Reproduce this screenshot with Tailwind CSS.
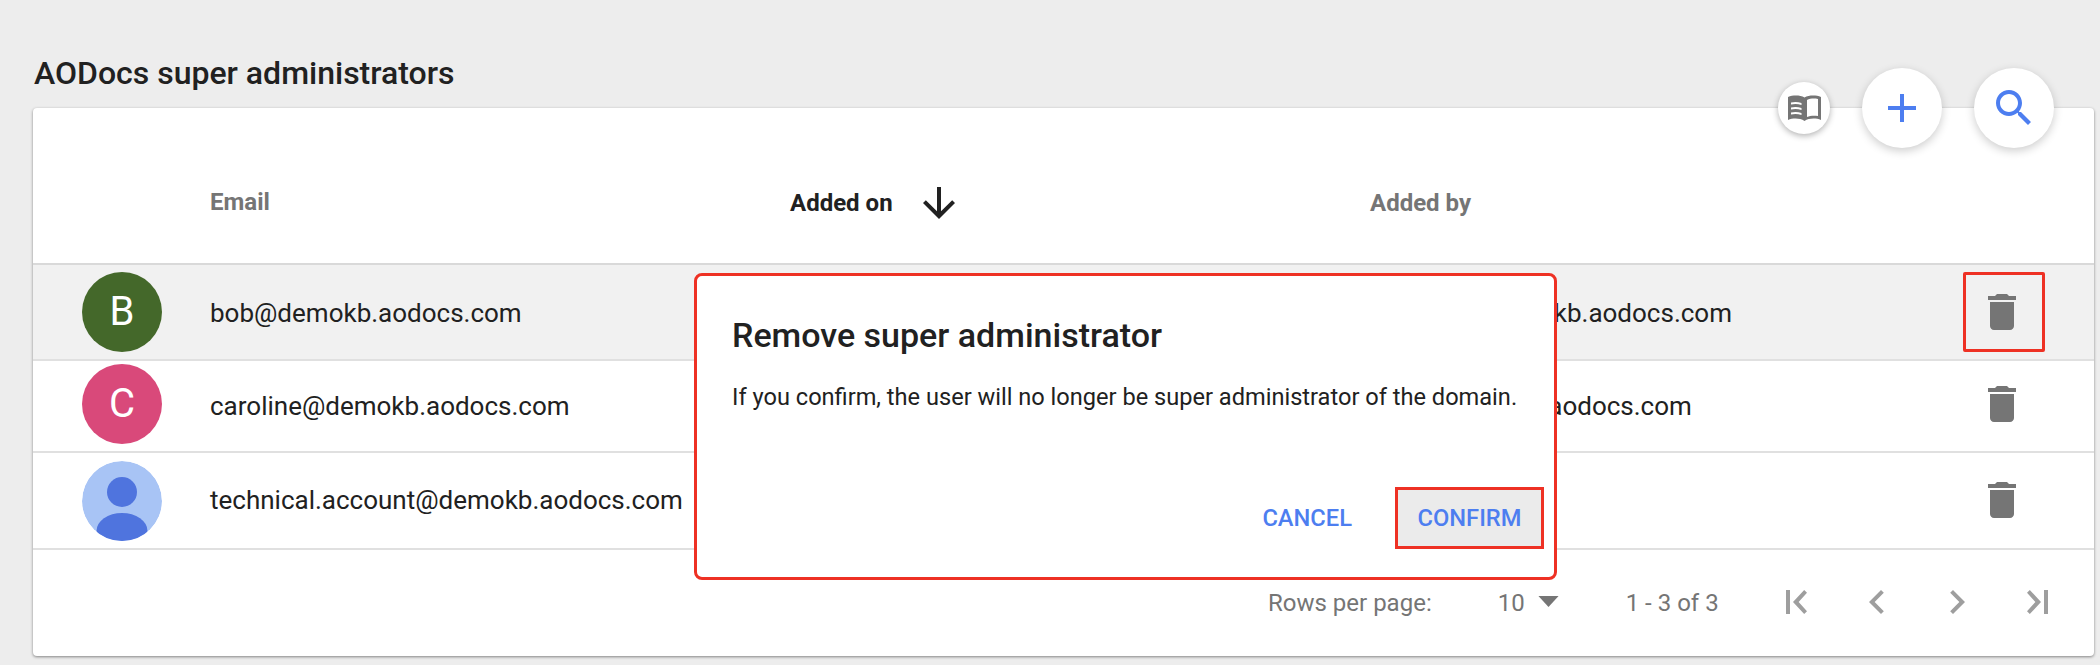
<!DOCTYPE html>
<html><head><meta charset="utf-8"><script src="https://cdn.jsdelivr.net/npm/@tailwindcss/browser@4"></script></head>
<body class="m-0 bg-[#ededed]">
<div class="relative w-[2100px] h-[665px] overflow-hidden bg-[#ededed] font-['Roboto',sans-serif] text-[#212121]">
  <h1 class="pl-[34px] pt-[56px] h-[108px] text-[32px] leading-[34px] font-medium">AODocs super administrators</h1>

  <div class="relative ml-[33px] w-[2061px] h-[548px] bg-white rounded-[4px] shadow-[0_1px_3px_rgba(0,0,0,0.45)] flex flex-col">
    <div class="grid grid-cols-[177px_580px_580px_1fr] items-center h-[157px] pt-[35px] border-b-2 border-[#d9d9d9] text-[24px] font-bold text-[#757575]">
      <span></span>
      <span class="-mt-[2px]">Email</span>
      <span class="flex items-center text-[#212121]"><span>Added on</span>
        <svg class="ml-[22px] w-[48px] h-[48px]" viewBox="0 0 24 24" fill="#212121"><path d="M20 12l-1.41-1.41L13 16.17V4h-2v12.17l-5.58-5.59L4 12l8 8 8-8z"/></svg>
      </span>
      <span>Added by</span>
    </div>

    <div class="grid grid-cols-[177px_1160px_1fr_131px] items-center h-[96px] border-b-2 border-[#e0e0e0] bg-[#f1f1f1] text-[26px]">
      <div class="pl-[49px]"><div class="w-[80px] h-[80px] rounded-full bg-[#44682a] text-white flex items-center justify-center text-[40px]">B</div></div>
      <span class="mt-[2px]">bob@demokb.aodocs.com</span>
      <span class="mt-[2px]">thomasi@demokb.aodocs.com</span>
      <div><div class="w-[82px] h-[80px] border-[3px] border-[#ee3124] rounded-[2px] flex items-center justify-center pr-[4px]">
        <svg class="w-[48px] h-[48px]" viewBox="0 0 24 24" fill="#757575"><path d="M6 19c0 1.1.9 2 2 2h8c1.1 0 2-.9 2-2V7H6v12zM19 4h-3.5l-1-1h-5l-1 1H5v2h14V4z"/></svg>
      </div></div>
    </div>

    <div class="grid grid-cols-[177px_1160px_1fr_131px] items-center h-[92px] border-b-2 border-[#e0e0e0] text-[26px]">
      <div class="pl-[49px]"><div class="w-[80px] h-[80px] -mt-[4px] rounded-full bg-[#d9497a] text-white flex items-center justify-center text-[40px]">C</div></div>
      <span>caroline@demokb.aodocs.com</span>
      <span>alice@demokb.aodocs.com</span>
      <div class="flex justify-center w-[78px] -mt-[4px]">
        <svg class="w-[48px] h-[48px]" viewBox="0 0 24 24" fill="#757575"><path d="M6 19c0 1.1.9 2 2 2h8c1.1 0 2-.9 2-2V7H6v12zM19 4h-3.5l-1-1h-5l-1 1H5v2h14V4z"/></svg>
      </div>
    </div>

    <div class="grid grid-cols-[177px_1160px_1fr_131px] items-center h-[97px] border-b-2 border-[#e0e0e0] text-[26px]">
      <div class="pl-[49px]"><div class="w-[80px] h-[80px] rounded-full overflow-hidden">
        <svg class="w-full h-full" viewBox="0 0 80 80"><circle cx="40" cy="40" r="40" fill="#a8c4f5"/><circle cx="40" cy="31" r="15" fill="#4f74de"/><ellipse cx="40" cy="70" rx="25.5" ry="18" fill="#4f74de"/></svg>
      </div></div>
      <span>technical.account@demokb.aodocs.com</span>
      <span></span>
      <div class="flex justify-center w-[78px] -mt-[2px]">
        <svg class="w-[48px] h-[48px]" viewBox="0 0 24 24" fill="#757575"><path d="M6 19c0 1.1.9 2 2 2h8c1.1 0 2-.9 2-2V7H6v12zM19 4h-3.5l-1-1h-5l-1 1H5v2h14V4z"/></svg>
      </div>
    </div>

    <div class="flex-1 flex items-center text-[#757575] text-[24px]">
      <span class="ml-[1235px]">Rows per page:</span>
      <span class="ml-[66px]">10</span>
      <svg class="ml-[13px] w-[21px] h-[11px] -mt-[4px]" viewBox="0 0 22 12" fill="#757575"><path d="M0 0h22L11 12z"/></svg>
      <span class="ml-[67px]">1 - 3 of 3</span>
      <div class="ml-[54px] flex items-center gap-[32px] -mt-[2px]">
        <svg class="w-[48px] h-[48px]" viewBox="0 0 24 24" fill="#9e9e9e"><path d="M6.5 6h2v12h-2zM17 7.41L15.59 6 10 12l5.59 6L17 16.59 12.82 12z"/></svg>
        <svg class="w-[48px] h-[48px]" viewBox="0 0 24 24" fill="#9e9e9e"><path d="M15.41 7.41L14 6l-6 6 6 6 1.41-1.41L10.83 12z"/></svg>
        <svg class="w-[48px] h-[48px]" viewBox="0 0 24 24" fill="#9e9e9e"><path d="M10 6L8.59 7.41 13.17 12l-4.58 4.59L10 18l6-6z"/></svg>
        <svg class="w-[48px] h-[48px]" viewBox="0 0 24 24" fill="#9e9e9e"><path d="M15.5 6h2v12h-2zM7 7.41L8.41 6 14 12l-5.59 6L7 16.59 11.18 12z"/></svg>
      </div>
    </div>
  </div>

  <!-- floating buttons over the card -->
  <div class="absolute left-[1778px] top-[82px] w-[52px] h-[52px] rounded-full bg-white shadow-[0_2px_6px_rgba(0,0,0,0.3)] flex items-center justify-center">
    <svg class="w-[33px] h-[26px]" viewBox="0 0 33 26"><path fill="#757575" d="M0 2C5 0 12 0 16.5 2.5 21 0 28 0 33 2V25C28 23 21 23 16.5 26 12 23 5 23 0 25Z"/><path fill="#fff" d="M19 5C22 3.6 26 3.2 30 4V21C26 20.3 22 20.6 19 22ZM3 7.5C6 6.7 10 6.7 13.5 8V10C10 8.7 6 8.7 3 9.5ZM3 12.5C6 11.7 10 11.7 13.5 13V15C10 13.7 6 13.7 3 14.5ZM3 17.5C6 16.7 10 16.7 13.5 18V20C10 18.7 6 18.7 3 19.5Z"/></svg>
  </div>
  <div class="absolute left-[1862px] top-[68px] w-[80px] h-[80px] rounded-full bg-white shadow-[0_3px_10px_rgba(0,0,0,0.2)] flex items-center justify-center">
    <svg class="w-[48px] h-[48px]" viewBox="0 0 24 24" fill="#4d7ef0"><path d="M19 13h-6v6h-2v-6H5v-2h6V5h2v6h6v2z"/></svg>
  </div>
  <div class="absolute left-[1974px] top-[68px] w-[80px] h-[80px] rounded-full bg-white shadow-[0_3px_10px_rgba(0,0,0,0.2)] flex items-center justify-center">
    <svg class="w-[48px] h-[48px]" viewBox="0 0 24 24" fill="#4d7ef0"><path d="M15.5 14h-.79l-.28-.27C15.41 12.59 16 11.11 16 9.5 16 5.91 13.09 3 9.5 3S3 5.91 3 9.5 5.91 16 9.5 16c1.61 0 3.09-.59 4.23-1.57l.27.28v.79l5 4.99L20.49 19l-4.99-5zm-6 0C7.01 14 5 11.99 5 9.5S7.01 5 9.5 5 14 7.01 14 9.5 11.99 14 9.5 14z"/></svg>
  </div>

  <!-- dialog -->
  <div class="absolute left-[694px] top-[273px] w-[863px] h-[307px] bg-white border-[3px] border-[#ee3124] rounded-[8px] flex flex-col pl-[35px] pr-[10px]">
    <h2 class="mt-[39px] text-[34px] leading-[40px] font-medium">Remove super administrator</h2>
    <p class="mt-[27px] text-[23.6px] leading-[30px]">If you confirm, the user will no longer be super administrator of the domain.</p>
    <div class="mt-auto mb-[28px] flex items-center justify-end text-[#4d7ef0] text-[23.7px] font-medium">
      <span class="mt-[2px]">CANCEL</span>
      <span class="ml-[43px] w-[149px] h-[62px] pt-[2px] border-[3px] border-[#ee3124] bg-[#ebebeb] flex items-center justify-center">CONFIRM</span>
    </div>
  </div>
</div>
</body></html>
